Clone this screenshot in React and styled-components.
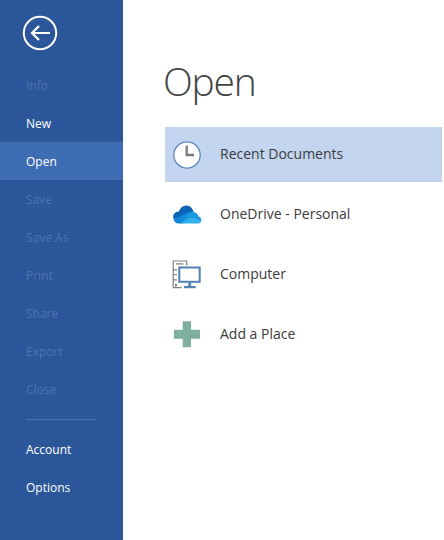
import React from 'react'
import styled, { createGlobalStyle } from 'styled-components'

const GlobalStyle = createGlobalStyle`
    html, body {
        margin: 0;
        padding: 0;
        background: #fff;
    }
    body {
        font-family: "Open Sans", "Noto Sans", "Liberation Sans", sans-serif;
    }
`

const topItems = [
    { label: 'Info', disabled: true },
    { label: 'New' },
    { label: 'Open', active: true },
    { label: 'Save', disabled: true },
    { label: 'Save As', disabled: true },
    { label: 'Print', disabled: true },
    { label: 'Share', disabled: true },
    { label: 'Export', disabled: true },
    { label: 'Close', disabled: true },
]

function BackIcon() {
    return (
        <svg width="36" height="36" viewBox="0 0 36 36" fill="none" stroke="#fff">
            <circle cx="18" cy="18" r="16.2" strokeWidth="2" />
            <path d="M10 18H28M17 11L10 18L17 25" strokeWidth="2.2" />
        </svg>
    )
}

function ClockIcon() {
    return (
        <svg width="30" height="30" viewBox="0 0 30 30" fill="none">
            <circle cx="15" cy="15" r="13.2" fill="#fff" stroke="#5b87bb" strokeWidth="1.3" />
            <path d="M14.7 5.5V15H22" stroke="#7b7b7b" strokeWidth="2.3" />
        </svg>
    )
}

function CloudIcon() {
    return (
        <svg width="30" height="30" viewBox="0 0 30 30">
            <path d="M1.5 19C0 14.5 3.5 11.5 6.8 11.5C8.2 7.5 11 5.5 14.2 5.5C17.6 5.5 20.4 7.8 21.4 11.5L12 17.5Z" fill="#0a64b5" />
            <path d="M10 23.5H6C3.5 23.5 2.2 21.8 1.6 19.6L12 14L21.4 11.5L24 20Z" fill="#0f86d8" />
            <path d="M9 23.5L14.5 15.2C16.2 13 18.4 11.8 21.4 11.8C25 13 26.4 14.8 26.6 16.5C28.6 17 29.6 18.6 29.4 20.4L18 20Z" fill="#1a98e0" />
            <path d="M8.5 23.5H26.5C28.2 23.2 29.2 22 29.4 20.4L19 17.5Z" fill="#34b0ec" />
        </svg>
    )
}

function ComputerIcon() {
    return (
        <svg width="30" height="30" viewBox="0 0 30 30" fill="none">
            <path d="M9.7 27.7H1.2V1H14.7V5.5" stroke="#7f7f7f" strokeWidth="1.2" />
            <path d="M4 3.8H11.3M1 9.8H5M1 14.5H5M1 19.8H5" stroke="#7f7f7f" strokeWidth="1.2" />
            <rect x="3" y="24" width="1.8" height="2.6" fill="#7f7f7f" />
            <rect x="7.3" y="7.5" width="20.4" height="14.3" fill="#fff" stroke="#4f81b3" strokeWidth="2" />
            <rect x="16.3" y="22.8" width="2.8" height="3.2" fill="#4f81b3" />
            <rect x="12" y="26" width="11.7" height="2.2" fill="#4f81b3" />
        </svg>
    )
}

function PlusIcon() {
    return (
        <svg width="30" height="30" viewBox="0 0 30 30">
            <path d="M10.7 1.2H19V9.8H28V18.8H19V27.2H10.7V18.8H2V9.8H10.7Z" fill="#7fb09f" />
        </svg>
    )
}

const places = [
    { label: 'Recent Documents', Icon: ClockIcon, selected: true },
    { label: 'OneDrive - Personal', Icon: CloudIcon },
    { label: 'Computer', Icon: ComputerIcon },
    { label: 'Add a Place', Icon: PlusIcon },
]

export default function App() {
    return (
        <Page>
            <GlobalStyle />
            <Sidebar>
                <BackButton>
                    <BackIcon />
                </BackButton>
                {topItems.map((item) => (
                    <MenuItem key={item.label} $active={item.active} $disabled={item.disabled}>
                        {item.label}
                    </MenuItem>
                ))}
                <Divider />
                <MenuItem>Account</MenuItem>
                <MenuItem>Options</MenuItem>
            </Sidebar>
            <Main>
                <Title>Open</Title>
                <PlaceList>
                    {places.map(({ label, Icon, selected }) => (
                        <Place key={label} $selected={selected}>
                            <IconSlot>
                                <Icon />
                            </IconSlot>
                            <PlaceLabel>{label}</PlaceLabel>
                        </Place>
                    ))}
                </PlaceList>
            </Main>
        </Page>
    )
}

const Page = styled.div`
    display: flex;
    width: 444px;
    height: 540px;
    overflow: hidden;
    background: #fff;
`
const Sidebar = styled.nav`
    width: 123px;
    flex-shrink: 0;
    background: #2b579a;
`
const BackButton = styled.div`
    height: 66px;
    padding-left: 22px;
    padding-top: 15px;
    box-sizing: border-box;
`
const MenuItem = styled.div`
    height: 38px;
    line-height: 40px;
    padding-left: 26px;
    font-size: 12px;
    color: ${(p) => (p.$disabled ? '#4c74b0' : '#fff')};
    background: ${(p) => (p.$active ? '#3e6db3' : 'transparent')};
`
const Divider = styled.div`
    width: 71px;
    height: 1px;
    margin: 11px 0 10px 26px;
    background: #4c74b0;
`
const Main = styled.main`
    flex: 1;
    padding: 0 2px 0 42px;
`
const Title = styled.h1`
    margin: 0 0 0 -2px;
    height: 127px;
    padding-top: 55px;
    box-sizing: border-box;
    font-size: 39px;
    line-height: 52px;
    font-weight: 300;
    letter-spacing: -1.2px;
    color: #444;
`
const PlaceList = styled.div`
    display: flex;
    flex-direction: column;
    gap: 5px;
`
const Place = styled.div`
    display: flex;
    align-items: center;
    height: 55px;
    background: ${(p) => (p.$selected ? '#c3d5ef' : 'transparent')};
`
const IconSlot = styled.div`
    display: flex;
    width: 30px;
    height: 30px;
    margin: 0 18px 0 7px;
`
const PlaceLabel = styled.span`
    font-size: 14px;
    line-height: 18px;
    margin-top: -1px;
    color: #3b3b3b;
`
